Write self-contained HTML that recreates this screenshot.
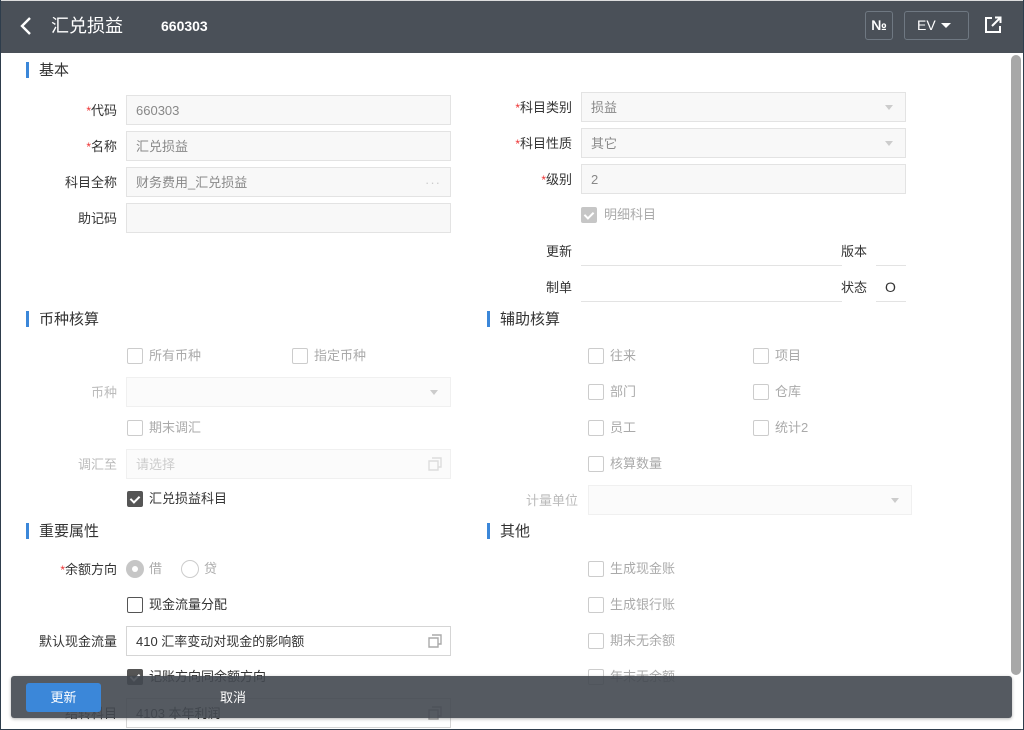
<!DOCTYPE html>
<html><head><meta charset="utf-8"><style>
*{box-sizing:border-box;margin:0;padding:0}
body{width:1024px;height:730px;overflow:hidden;background:#fff;font-family:"Liberation Sans","Noto Sans CJK SC",sans-serif;font-size:13px;color:#333;position:relative}
.a{position:absolute;white-space:nowrap}
.hdr{left:0;top:0;width:1024px;height:53px;background:#4a5058;border-top:1px solid #ddd}
.sec{font-size:15px;color:#333;line-height:18px;margin-top:1px}
.sec:before{content:"";position:absolute;left:-13px;top:0px;width:3px;height:16px;background:#3b87d9}
.lbl{text-align:right;line-height:31px;color:#333}
.lbl.g{color:#bbb}
.req:before{content:"*";color:#e33;font-size:12px}
.in{height:30px;border:1px solid #e3e3e3;background:#f8f8f8;line-height:30px;padding-left:9px;color:#888}
.in.lt{background:#fbfbfb;border-color:#f0f0f0;color:#ccc}
.in.w{background:#fff;border-color:#d5d5d5;color:#333}
.dd:after{content:"";position:absolute;right:12px;top:12px;border:4px solid transparent;border-top:5px solid #ccc}
.cb{width:16px;height:16px;border:1px solid #bbb;border-radius:2px;background:#fff}
.cb.lt{border-color:#ccc}
.cb.dk{border-color:#555}
.cb.on{background:#555;border-color:#555}
.cb.gr{background:#c6c6c6;border-color:#c6c6c6}
.cb.on:after,.cb.gr:after{content:"";position:absolute;left:4px;top:2px;width:4px;height:7px;border:solid #fff;border-width:0 2px 2px 0;transform:rotate(45deg)}
.ct{line-height:18px}
.ct.g{color:#aaa}
.ul{border-bottom:1px solid #e3e3e3;height:30px}
.copy{position:absolute;right:8px;top:7px;width:14px;height:14px}
</style></head><body>
<div class="a hdr"></div>
<svg class="a" style="left:19px;top:16px" width="14" height="20" viewBox="0 0 14 20"><path d="M11 2 L3 10 L11 18" stroke="#fff" stroke-width="2.4" fill="none"/></svg>
<div class="a" style="left:51px;top:14px;font-size:18px;color:#fff;line-height:24px">汇兑损益</div>
<div class="a" style="left:161px;top:17px;font-size:14px;color:#fff;font-weight:bold;line-height:18px">660303</div>
<div class="a" style="left:865px;top:11px;width:28px;height:29px;border:1px solid #6f7882;border-radius:3px;color:#fff;font-size:14px;font-weight:bold;text-align:center;line-height:27px">№</div>
<div class="a" style="left:904px;top:11px;width:65px;height:29px;border:1px solid #6f7882;border-radius:3px;color:#fff;font-size:14px;line-height:27px;padding-left:12px">EV</div>
<div class="a" style="left:941px;top:23px;border:5px solid transparent;border-top:5px solid #fff;width:0;height:0"></div>
<svg class="a" style="left:984px;top:15px" width="19" height="19" viewBox="0 0 19 19"><path d="M8 3 H2 V17 H16 V11" stroke="#fff" stroke-width="2" fill="none"/><path d="M8 11 L16 3 M11 2.5 H16.5 V8" stroke="#fff" stroke-width="2" fill="none"/></svg>

<div class="a" style="left:1011px;top:55px;width:10px;height:620px;background:#a8a8a8;border-radius:5px"></div>

<!-- 基本 -->
<div class="a sec" style="left:39px;top:61px">基本</div>
<div class="a lbl req" style="left:20px;top:95px;width:97px">代码</div>
<div class="a in" style="left:126px;top:95px;width:325px">660303</div>
<div class="a lbl req" style="left:20px;top:131px;width:97px">名称</div>
<div class="a in" style="left:126px;top:131px;width:325px">汇兑损益</div>
<div class="a lbl" style="left:20px;top:167px;width:97px">科目全称</div>
<div class="a in" style="left:126px;top:167px;width:325px">财务费用_汇兑损益<span style="position:absolute;right:9px;color:#ccc;letter-spacing:1px">···</span></div>
<div class="a lbl" style="left:20px;top:203px;width:97px">助记码</div>
<div class="a in" style="left:126px;top:203px;width:325px"></div>

<div class="a lbl req" style="left:470px;top:92px;width:102px">科目类别</div>
<div class="a in dd" style="left:581px;top:92px;width:325px">损益</div>
<div class="a lbl req" style="left:470px;top:128px;width:102px">科目性质</div>
<div class="a in dd" style="left:581px;top:128px;width:325px">其它</div>
<div class="a lbl req" style="left:470px;top:164px;width:102px">级别</div>
<div class="a in" style="left:581px;top:164px;width:325px">2</div>
<div class="a cb gr" style="left:581px;top:207px"></div>
<div class="a ct g" style="left:604px;top:206px">明细科目</div>
<div class="a lbl" style="left:470px;top:236px;width:102px">更新</div>
<div class="a ul" style="left:581px;top:236px;width:261px"></div>
<div class="a lbl" style="left:841px;top:236px">版本</div>
<div class="a ul" style="left:876px;top:236px;width:30px"></div>
<div class="a lbl" style="left:470px;top:272px;width:102px">制单</div>
<div class="a ul" style="left:581px;top:272px;width:261px"></div>
<div class="a lbl" style="left:841px;top:272px">状态</div>
<div class="a ul" style="left:876px;top:272px;width:30px;padding-left:9px;line-height:31px;font-size:14px">O</div>

<!-- 币种核算 -->
<div class="a sec" style="left:39px;top:310px">币种核算</div>
<div class="a cb lt" style="left:127px;top:348px"></div><div class="a ct g" style="left:149px;top:347px">所有币种</div>
<div class="a cb lt" style="left:292px;top:348px"></div><div class="a ct g" style="left:314px;top:347px">指定币种</div>
<div class="a lbl g" style="left:20px;top:377px;width:97px">币种</div>
<div class="a in lt dd" style="left:126px;top:377px;width:325px"></div>
<div class="a cb lt" style="left:127px;top:420px"></div><div class="a ct g" style="left:149px;top:419px">期末调汇</div>
<div class="a lbl g" style="left:20px;top:449px;width:97px">调汇至</div>
<div class="a in lt" style="left:126px;top:449px;width:325px">请选择<svg class="copy" viewBox="0 0 14 14"><path d="M4 1 H13 V10 H10 M1 4 H10 V13 H1 Z" stroke="#ddd" stroke-width="1.4" fill="none"/></svg></div>
<div class="a cb on" style="left:127px;top:491px"></div><div class="a ct" style="left:149px;top:490px">汇兑损益科目</div>

<!-- 辅助核算 -->
<div class="a sec" style="left:500px;top:310px">辅助核算</div>
<div class="a cb lt" style="left:588px;top:348px"></div><div class="a ct g" style="left:610px;top:347px">往来</div>
<div class="a cb lt" style="left:753px;top:348px"></div><div class="a ct g" style="left:775px;top:347px">项目</div>
<div class="a cb lt" style="left:588px;top:384px"></div><div class="a ct g" style="left:610px;top:383px">部门</div>
<div class="a cb lt" style="left:753px;top:384px"></div><div class="a ct g" style="left:775px;top:383px">仓库</div>
<div class="a cb lt" style="left:588px;top:420px"></div><div class="a ct g" style="left:610px;top:419px">员工</div>
<div class="a cb lt" style="left:753px;top:420px"></div><div class="a ct g" style="left:775px;top:419px">统计2</div>
<div class="a cb lt" style="left:588px;top:456px"></div><div class="a ct g" style="left:610px;top:455px">核算数量</div>
<div class="a lbl g" style="left:480px;top:485px;width:98px">计量单位</div>
<div class="a in lt dd" style="left:588px;top:485px;width:324px"></div>

<!-- 重要属性 -->
<div class="a sec" style="left:39px;top:522px">重要属性</div>
<div class="a lbl req" style="left:20px;top:554px;width:97px">余额方向</div>
<div class="a" style="left:126px;top:560px;width:18px;height:18px;border-radius:50%;background:#c6c6c6"></div>
<div class="a" style="left:132px;top:566px;width:6px;height:6px;border-radius:50%;background:#fff"></div>
<div class="a ct g" style="left:149px;top:560px">借</div>
<div class="a" style="left:181px;top:560px;width:18px;height:18px;border-radius:50%;border:1px solid #ccc"></div>
<div class="a ct g" style="left:204px;top:560px">贷</div>
<div class="a cb dk" style="left:127px;top:597px"></div><div class="a ct" style="left:149px;top:596px">现金流量分配</div>
<div class="a lbl" style="left:10px;top:626px;width:107px">默认现金流量</div>
<div class="a in w" style="left:126px;top:626px;width:325px">410 汇率变动对现金的影响额<svg class="copy" viewBox="0 0 14 14"><path d="M4 1 H13 V10 H10 M1 4 H10 V13 H1 Z" stroke="#aaa" stroke-width="1.4" fill="none"/></svg></div>
<div class="a cb on" style="left:127px;top:669px"></div><div class="a ct" style="left:149px;top:668px">记账方向同余额方向</div>
<div class="a lbl" style="left:10px;top:698px;width:107px">结转科目</div>
<div class="a in w" style="left:126px;top:698px;width:325px">4103 本年利润<svg class="copy" viewBox="0 0 14 14"><path d="M4 1 H13 V10 H10 M1 4 H10 V13 H1 Z" stroke="#aaa" stroke-width="1.4" fill="none"/></svg></div>

<!-- 其他 -->
<div class="a sec" style="left:500px;top:522px">其他</div>
<div class="a cb lt" style="left:588px;top:561px"></div><div class="a ct g" style="left:610px;top:560px">生成现金账</div>
<div class="a cb lt" style="left:588px;top:597px"></div><div class="a ct g" style="left:610px;top:596px">生成银行账</div>
<div class="a cb lt" style="left:588px;top:633px"></div><div class="a ct g" style="left:610px;top:632px">期末无余额</div>
<div class="a cb lt" style="left:588px;top:669px"></div><div class="a ct g" style="left:610px;top:668px">年末无余额</div>

<!-- bottom bar -->
<div class="a" style="left:11px;top:676px;width:1001px;height:42px;background:rgba(66,72,80,0.9);border-radius:3px;box-shadow:0 1px 3px rgba(0,0,0,.3)"></div>
<div class="a" style="left:26px;top:683px;width:75px;height:29px;background:#3b87d9;border-radius:3px;color:#fff;text-align:center;line-height:29px;font-size:13px">更新</div>
<div class="a" style="left:220px;top:683px;color:#fff;line-height:29px;font-size:13px">取消</div>

<div class="a" style="left:0;top:0;width:1024px;height:730px;border:1px solid #2e3d4c;border-top:none"></div>
</body></html>
